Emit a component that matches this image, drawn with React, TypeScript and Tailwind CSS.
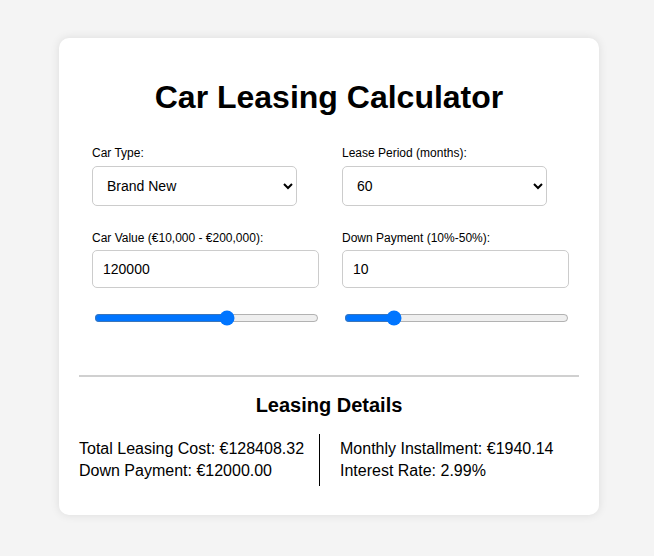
import React from "react";

export default function App() {
  return (
    <div className="min-h-[556px] w-full bg-[#f4f4f4] pt-[38px]" style={{ fontFamily: '"Liberation Sans", Arial, sans-serif' }}>
      <div className="ml-[59px] w-[540px] rounded-[10px] bg-white px-5 pb-[29px] pt-5 shadow-[0_0_10px_rgba(0,0,0,0.1)]">
        <h1 className="mt-[21px] mb-[30px] text-center text-[32px] font-bold leading-[37px] text-black">Car Leasing Calculator</h1>
        <div className="ml-[13px] grid grid-cols-[250px_227px]">
          <div className="flex flex-col">
            <label className="mb-[6px] text-[12px] leading-[14px] text-black">Car Type:</label>
            <select className="h-[40px] w-[205px] rounded-[5px] border border-[#ccc] px-[10px] text-[14px] text-black" defaultValue="new">
              <option value="new">Brand New</option>
              <option value="used">Used</option>
            </select>
          </div>
          <div className="flex flex-col">
            <label className="mb-[6px] text-[12px] leading-[14px] text-black">Lease Period (months):</label>
            <select className="h-[40px] w-[205px] rounded-[5px] border border-[#ccc] px-[10px] text-[14px] text-black" defaultValue="60">
              <option value="12">12</option>
              <option value="24">24</option>
              <option value="36">36</option>
              <option value="48">48</option>
              <option value="60">60</option>
            </select>
          </div>
          <div className="mt-[25px] flex flex-col">
            <label className="mb-[5px] text-[12px] leading-[14px] text-black">Car Value (€10,000 - €200,000):</label>
            <input type="text" defaultValue="120000" className="h-[38px] w-[227px] rounded-[5px] border border-[#ccc] px-[10px] text-[14px] text-black" />
            <input type="range" min={0} max={200000} defaultValue={120000} className="ml-[2px] mt-[22px] w-[225px]" />
          </div>
          <div className="mt-[25px] flex flex-col">
            <label className="mb-[5px] text-[12px] leading-[14px] text-black">Down Payment (10%-50%):</label>
            <input type="text" defaultValue="10" className="h-[38px] w-[227px] rounded-[5px] border border-[#ccc] px-[10px] text-[14px] text-black" />
            <input type="range" min={0} max={50} defaultValue={10} className="ml-[2px] mt-[22px] w-[225px]" />
          </div>
        </div>
        <div className="mt-[49px] h-[2px] w-full bg-[#d0d0d0]" />
        <h3 className="mt-[17px] text-center text-[20px] font-bold leading-[23px] text-black">Leasing Details</h3>
        <div className="mt-[17px] flex">
          <div className="w-[240px] py-[4px] text-[16px] leading-[22px] text-black">
            <p>Total Leasing Cost: €128408.32</p>
            <p>Down Payment: €12000.00</p>
          </div>
          <div className="border-l border-black py-[4px] pl-5 text-[16px] leading-[22px] text-black">
            <p>Monthly Installment: €1940.14</p>
            <p>Interest Rate: 2.99%</p>
          </div>
        </div>
      </div>
    </div>
  );
}
